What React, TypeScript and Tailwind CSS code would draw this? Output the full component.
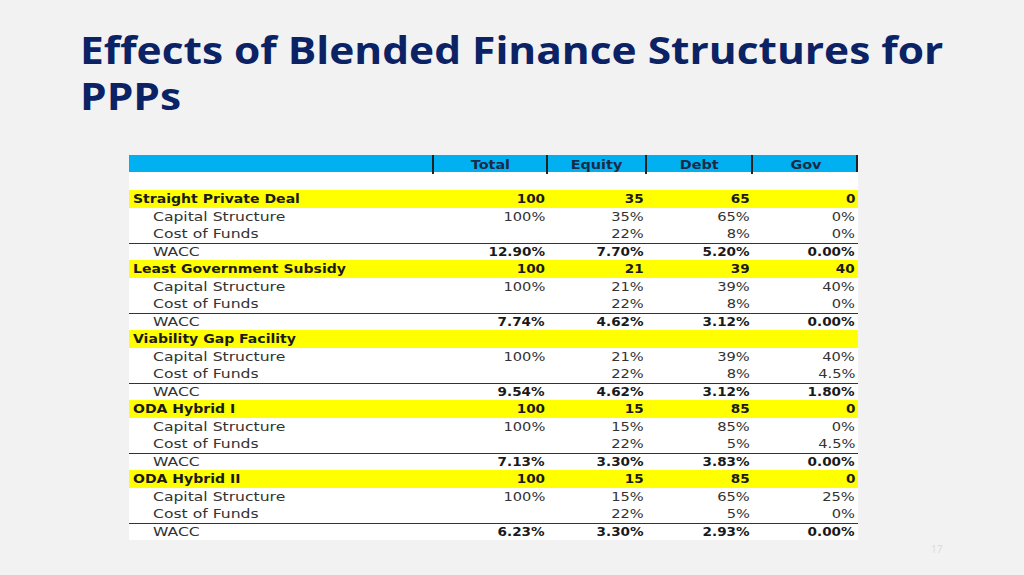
import React from "react";

type Group = {
  title: string;
  head: string[];
  cap: string[];
  cost: string[];
  wacc: string[];
};

const groups: Group[] = [
  { title: "Straight Private Deal", head: ["100", "35", "65", "0"], cap: ["100%", "35%", "65%", "0%"], cost: ["", "22%", "8%", "0%"], wacc: ["12.90%", "7.70%", "5.20%", "0.00%"] },
  { title: "Least Government Subsidy", head: ["100", "21", "39", "40"], cap: ["100%", "21%", "39%", "40%"], cost: ["", "22%", "8%", "0%"], wacc: ["7.74%", "4.62%", "3.12%", "0.00%"] },
  { title: "Viability Gap Facility", head: ["", "", "", ""], cap: ["100%", "21%", "39%", "40%"], cost: ["", "22%", "8%", "4.5%"], wacc: ["9.54%", "4.62%", "3.12%", "1.80%"] },
  { title: "ODA Hybrid I", head: ["100", "15", "85", "0"], cap: ["100%", "15%", "85%", "0%"], cost: ["", "22%", "5%", "4.5%"], wacc: ["7.13%", "3.30%", "3.83%", "0.00%"] },
  { title: "ODA Hybrid II", head: ["100", "15", "85", "0"], cap: ["100%", "15%", "65%", "25%"], cost: ["", "22%", "5%", "0%"], wacc: ["6.23%", "3.30%", "2.93%", "0.00%"] },
];

const cols = "grid grid-cols-[305px_114px_99px_106px_105px]";

function Row({ label, vals, kind }: { label: string; vals: string[]; kind: "head" | "sub" | "wacc" }) {
  const bg = kind === "head" ? "bg-[#ffff00]" : "bg-white";
  const border = kind === "wacc" ? "border-t border-[#333]" : "";
  const boldVals = kind === "head" || kind === "wacc";
  return (
    <div className={`${cols} h-[17.5px] items-center pt-[1px] ${bg} ${border}`}>
      <div className={`${kind === "head" ? "pl-[4px]" : "pl-[24px]"} leading-none whitespace-nowrap`}>
        <span
          className={`inline-block origin-left ${kind === "head" ? "font-bold scale-x-[1.17] text-[#1a1a1a]" : "scale-x-[1.3] text-[#333]"}`}
        >
          {label}
        </span>
      </div>
      {vals.map((v, i) => (
        <div key={i} className="text-right leading-none pr-[3px] whitespace-nowrap">
          <span
            className={`inline-block origin-right ${boldVals ? "font-bold scale-x-[1.13] text-[#1a1a1a]" : "scale-x-[1.22] text-[#333]"}`}
          >
            {v}
          </span>
        </div>
      ))}
    </div>
  );
}

function HeadCell({ text, last }: { text: string; last?: boolean }) {
  return (
    <div className={`${last ? "" : "border-r-2 border-[#222]"} h-full flex items-center justify-center pt-[1px]`}>
      <span className="inline-block scale-x-[1.2]">{text}</span>
    </div>
  );
}

export default function App() {
  return (
    <div className="w-[1024px] h-[575px] bg-[#f2f2f2] overflow-hidden flex flex-col pt-[26px]">
      <div
        className="ml-[80px] text-[38px] font-bold text-[#0b2265] whitespace-nowrap"
        style={{ fontFamily: "'Open Sans', sans-serif" }}
      >
        <div className="leading-[46px] scale-x-[1.117] origin-left">Effects of Blended Finance Structures for</div>
        <div className="leading-[46px] scale-x-[1.117] origin-left">PPPs</div>
      </div>
      <div
        className="ml-[129px] mt-[37px] w-[729px] bg-white text-[12px]"
        style={{ fontFamily: "'DejaVu Sans', Verdana, sans-serif" }}
      >
        <div className={`${cols} h-[17px] items-center bg-[#00b0f0] border-r-2 border-[#222] font-bold text-[#1c2a48]`}>
          <div className="border-r-2 border-[#222] h-full" />
          <HeadCell text="Total" />
          <HeadCell text="Equity" />
          <HeadCell text="Debt" />
          <HeadCell text="Gov" last />
        </div>
        <div className="h-[18px]" />
        {groups.map((g) => (
          <React.Fragment key={g.title}>
            <Row label={g.title} vals={g.head} kind="head" />
            <Row label="Capital Structure" vals={g.cap} kind="sub" />
            <Row label="Cost of Funds" vals={g.cost} kind="sub" />
            <Row label="WACC" vals={g.wacc} kind="wacc" />
          </React.Fragment>
        ))}
      </div>
      <div
        className="ml-[931px] mt-[4px] text-[10px] leading-none text-[#d9d9d9]"
        style={{ fontFamily: "'Open Sans', sans-serif" }}
      >
        17
      </div>
    </div>
  );
}
